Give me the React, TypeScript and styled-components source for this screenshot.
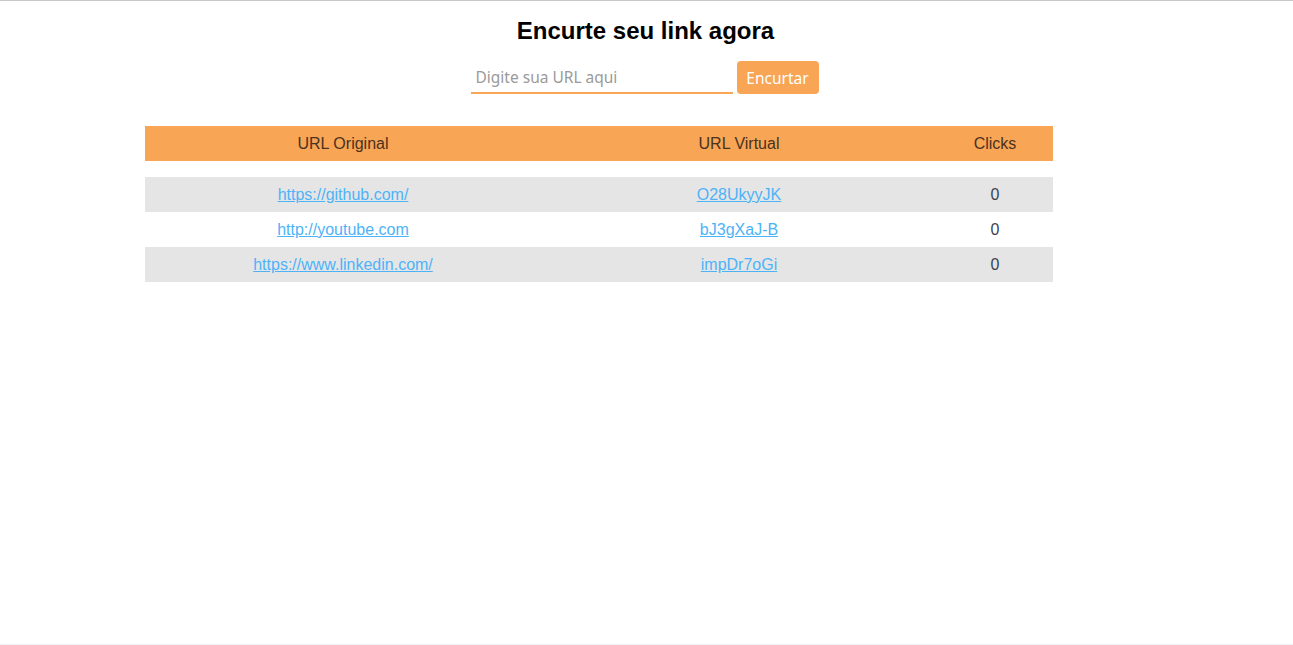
import React from "react";
import styled, { createGlobalStyle } from "styled-components";

const Global = createGlobalStyle`
  html, body { margin: 0; padding: 0; background: #fff; }
  body {
    font-family: "Liberation Sans", Arial, sans-serif;
    border-top: 1px solid #c8c8c8;
    min-height: 645px;
    box-sizing: border-box;
    border-bottom: 1px solid #eef2f4;
    overflow: hidden;
  }
`;

const Page = styled.main`
  display: flex;
  flex-direction: column;
  align-items: center;
`;

const Title = styled.h1`
  margin: 16px 0 0;
  font-size: 24px;
  font-weight: bold;
  color: #000;
  line-height: 28px;
  transform: translateX(-1px);
`;

const Form = styled.form`
  display: flex;
  align-items: flex-end;
  gap: 4px;
  margin-top: 16px;
  margin-right: 4px;
`;

const Input = styled.input`
  width: 262px;
  height: 32px;
  box-sizing: border-box;
  border: none;
  border-bottom: 2px solid #f8a555;
  outline: none;
  padding: 0 5px;
  font-family: "Noto Sans", "Open Sans", sans-serif;
  font-size: 15.5px;
  color: #333;
  background: transparent;
  &::placeholder { color: #9a9a9a; }
`;

const Button = styled.button`
  width: 82px;
  height: 33px;
  border: none;
  border-radius: 4px;
  background: #f8a555;
  color: #fff;
  font-family: "Noto Sans", "Open Sans", sans-serif;
  font-size: 15.5px;
  padding: 0;
  cursor: pointer;
`;

const Table = styled.table`
  margin-top: 32px;
  width: 908px;
  border-collapse: collapse;
  margin-left: 145px;
  align-self: flex-start;
  font-size: 16px;
`;

const HeadCell = styled.th<{ $w: number }>`
  width: ${(p) => p.$w}px;
  height: 35px;
  padding: 0;
  background: #f8a555;
  color: #4a3220;
  font-weight: normal;
  text-align: center;
`;

const Spacer = styled.tr`
  height: 16px;
`;

const Row = styled.tr<{ $striped: boolean }>`
  height: 35px;
  background: ${(p) => (p.$striped ? "#e5e5e5" : "#fff")};
`;

const Cell = styled.td`
  padding: 0;
  text-align: center;
  color: #3b4250;
`;

const Link = styled.a`
  color: #4db3f9;
  text-decoration: underline;
`;

const rows = [
  { url: "https://github.com/", short: "O28UkyyJK", clicks: 0 },
  { url: "http://youtube.com", short: "bJ3gXaJ-B", clicks: 0 },
  { url: "https://www.linkedin.com/", short: "impDr7oGi", clicks: 0 },
];

export default function App() {
  return (
    <>
      <Global />
      <Page>
        <Title>Encurte seu link agora</Title>
        <Form onSubmit={(e) => e.preventDefault()}>
          <Input placeholder="Digite sua URL aqui" />
          <Button type="submit">Encurtar</Button>
        </Form>
        <Table>
          <thead>
            <tr>
              <HeadCell $w={396}>URL Original</HeadCell>
              <HeadCell $w={396}>URL Virtual</HeadCell>
              <HeadCell $w={116}>Clicks</HeadCell>
            </tr>
          </thead>
          <tbody>
            <Spacer />
            {rows.map((r, i) => (
              <Row key={r.short} $striped={i % 2 === 0}>
                <Cell>
                  <Link href={r.url}>{r.url}</Link>
                </Cell>
                <Cell>
                  <Link href={"#" + r.short}>{r.short}</Link>
                </Cell>
                <Cell>{r.clicks}</Cell>
              </Row>
            ))}
          </tbody>
        </Table>
      </Page>
    </>
  );
}
